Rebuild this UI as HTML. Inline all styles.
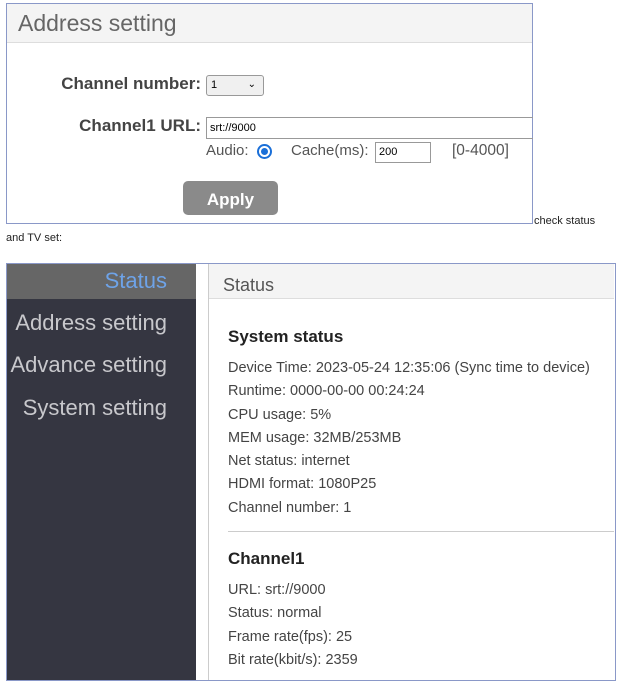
<!DOCTYPE html>
<html><head><meta charset="utf-8"><style>
body{margin:0;width:621px;height:686px;background:#fff;position:relative;font-family:"Liberation Sans",sans-serif;overflow:hidden}
.a{position:absolute}
</style></head><body>
<div class="a" style="left:6px;top:3px;width:526px;height:219px;border:1px solid #8a98c8;border-right:none"></div>
<div class="a" style="left:532px;top:3px;width:1px;height:220px;background:#8a98c8"></div>
<div class="a" style="left:7px;top:4px;width:525px;height:38px;background:#f4f4f4;border-bottom:1px solid #ddd"></div>
<div class="a" style="left:18px;top:10px;font-size:23px;color:#666">Address setting</div>
<div class="a" style="left:30px;top:74px;width:171px;text-align:right;font-size:17px;font-weight:bold;color:#444">Channel number:</div>
<div class="a" style="left:206px;top:75px;width:56px;height:19px;border:1px solid #999;border-radius:3px;background:#f0f0f0;font-size:11px;line-height:19px;text-indent:4px">1<span style="position:absolute;right:7px;top:-1px;font-size:10px">&#8964;</span></div>
<div class="a" style="left:30px;top:116px;width:171px;text-align:right;font-size:17px;font-weight:bold;color:#444">Channel1 URL:</div>
<div class="a" style="left:206px;top:117px;width:326px;height:20px;border:1px solid #999;border-right:none;font-size:11px;line-height:20px;text-indent:3px">srt://9000</div>
<div class="a" style="left:206px;top:142px;font-size:15px;color:#555">Audio:</div>
<div class="a" style="left:257px;top:144px;width:11px;height:11px;border:2px solid #1a6fd8;border-radius:50%"></div>
<div class="a" style="left:261px;top:148px;width:7px;height:7px;background:#1a6fd8;border-radius:50%"></div>
<div class="a" style="left:291px;top:142px;font-size:15px;color:#555">Cache(ms):</div>
<div class="a" style="left:375px;top:142px;width:54px;height:19px;border:1px solid #999;font-size:11px;line-height:19px;text-indent:3px">200</div>
<div class="a" style="left:452px;top:142px;font-size:15.5px;color:#555">[0-4000]</div>
<div class="a" style="left:183px;top:181px;width:95px;height:34px;background:#8a8a8a;border-radius:5px;color:#fff;font-weight:bold;font-size:17px;text-align:center;line-height:38px">Apply</div>
<div class="a" style="left:534px;top:215px;font-size:11px;color:#222">check status</div>
<div class="a" style="left:6px;top:232px;font-size:11px;color:#222">and TV set:</div>

<div class="a" style="left:6px;top:263px;width:608px;height:416px;border:1px solid #8a98c8"></div>
<div class="a" style="left:7px;top:264px;width:189px;height:416px;background:#353641"></div>
<div class="a" style="left:7px;top:264px;width:189px;height:35px;background:#666"></div>
<div class="a" style="left:7px;top:268px;width:160px;text-align:right;font-size:22px;color:#6ea3e8">Status</div>
<div class="a" style="left:0;top:310px;width:167px;text-align:right;font-size:22px;color:#c8c8cc">Address setting</div>
<div class="a" style="left:0;top:352px;width:167px;text-align:right;font-size:22px;color:#c8c8cc">Advance setting</div>
<div class="a" style="left:0;top:395px;width:167px;text-align:right;font-size:22px;color:#c8c8cc">System setting</div>
<div class="a" style="left:208px;top:264px;width:1px;height:416px;background:#ccc"></div>
<div class="a" style="left:209px;top:264px;width:405px;height:34px;background:#f4f4f4;border-bottom:1px solid #ddd"></div>
<div class="a" style="left:223px;top:275px;font-size:18px;color:#555">Status</div>
<div class="a" style="left:228px;top:327px;font-size:17px;font-weight:bold;color:#222">System status</div>
<div class="a" style="left:228px;top:357px;font-size:14.5px;color:#444;line-height:23.3px">Device Time: 2023-05-24 12:35:06 (Sync time to device)<br>Runtime: 0000-00-00 00:24:24<br>CPU usage: 5%<br>MEM usage: 32MB/253MB<br>Net status: internet<br>HDMI format: 1080P25<br>Channel number: 1</div>
<div class="a" style="left:228px;top:531px;width:386px;height:1px;background:#ccc"></div>
<div class="a" style="left:228px;top:549px;font-size:17px;font-weight:bold;color:#222">Channel1</div>
<div class="a" style="left:228px;top:579px;font-size:14.5px;color:#444;line-height:23.3px">URL: srt://9000<br>Status: normal<br>Frame rate(fps): 25<br>Bit rate(kbit/s): 2359</div>
</body></html>
